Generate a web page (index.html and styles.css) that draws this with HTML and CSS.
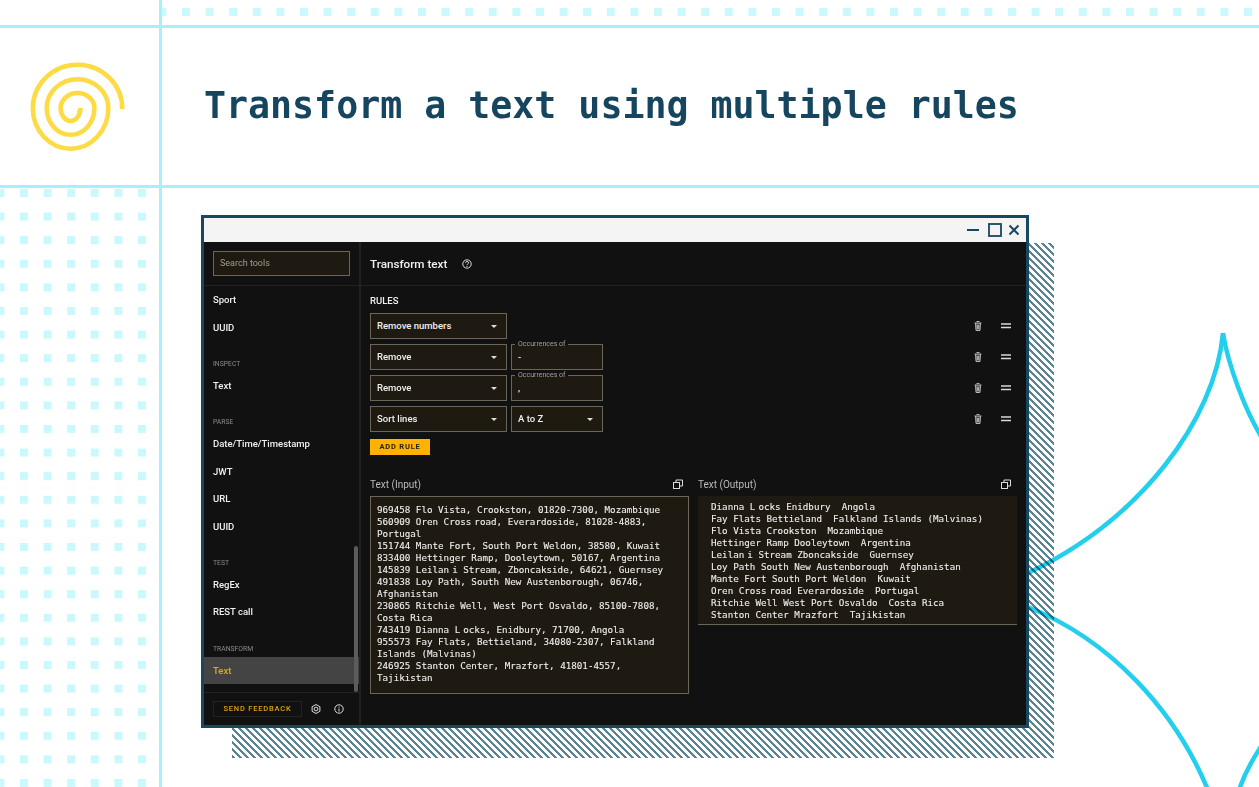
FILE: index.html
```html
<!DOCTYPE html>
<html lang="en">
<head>
<meta charset="utf-8">
<title>Transform a text using multiple rules</title>
<link rel="stylesheet" href="styles.css">
</head>
<body>
<div class="page">
  <svg class="curves" viewBox="0 0 1259 787" aria-hidden="true">
    <path d="M1223 333C1215 420 1140 520 1028 573"/>
    <path d="M1223 333C1228 365 1245 410 1262 438"/>
    <path d="M1028 607C1110 640 1175 710 1208 790"/>
    <path d="M1239 790C1243 778 1250 763 1262 745"/>
  </svg>

  <div class="row strip">
    <div class="cell-left"></div>
    <svg class="dots" aria-hidden="true"><defs><pattern id="dotsTop" x="-3.600" y="8" width="23.6" height="23.6" patternUnits="userSpaceOnUse"><rect class="dot" width="8" height="8"/></pattern></defs><rect width="100%" height="17" y="0" fill="url(#dotsTop)"/></svg>
  </div>

  <header class="row head">
    <div class="cell-left logo">
      <svg viewBox="0 0 160 158" width="159" height="158" aria-hidden="true"><path transform="translate(0 -28)" d="M123 109A45 44 0 0 0 33 108A38 41 0 0 0 109 108A31 29 0 0 0 47 108A24 27 0 0 0 95 108A17 15 0 0 0 61 108A10 13 0 0 0 81 108Q81 111 79 113"/></svg>
    </div>
    <h1>Transform a text using multiple rules</h1>
  </header>

  <div class="row stage">
    <div class="cell-left">
      <svg class="dots" aria-hidden="true"><defs><pattern id="dotsSide" x="-3.6" y="1" width="23.6" height="23.6" patternUnits="userSpaceOnUse"><rect class="dot" width="8" height="8"/></pattern></defs><rect width="100%" height="100%" fill="url(#dotsSide)"/></svg>
    </div>
    <div class="canvas">
      <div class="hatch"></div>
      <div class="window">
        <div class="titlebar">
          <svg viewBox="0 0 56 16" width="56" height="16" aria-hidden="true"><path d="M2 8H14"/><rect x="24" y="2" width="12" height="12"/><path d="M44.500 3.500L53.500 12.500M53.500 3.500L44.500 12.500"/></svg>
        </div>
        <div class="app">
          <aside class="sidebar">
            <div class="search-wrap"><div class="search">Search tools</div></div>
            <div class="tools">
              <div class="scrollbar"></div>
              <div class="tool">Sport</div>
              <div class="tool">UUID</div>
              <div class="cat">INSPECT</div>
              <div class="tool">Text</div>
              <div class="cat">PARSE</div>
              <div class="tool">Date/Time/Timestamp</div>
              <div class="tool">JWT</div>
              <div class="tool">URL</div>
              <div class="tool">UUID</div>
              <div class="cat">TEST</div>
              <div class="tool">RegEx</div>
              <div class="tool">REST call</div>
              <div class="cat">TRANSFORM</div>
              <div class="tool active">Text</div>
            </div>
            <div class="side-foot">
              <div class="feedback">SEND FEEDBACK</div>
              <svg class="ic" viewBox="0 0 12 12" width="12" height="12" aria-hidden="true"><path d="M6 1.500L9.900 3.700V8.300L6 10.500L2.100 8.300V3.700Z"/><circle cx="6" cy="6" r="1.900"/></svg>
              <svg class="ic" viewBox="0 0 12 12" width="12" height="12" aria-hidden="true"><circle cx="6" cy="6" r="4.200"/><path d="M6 5.500V8.500M6 3.600V4.600"/></svg>
            </div>
          </aside>
          <main class="main">
            <div class="main-head">
              <span class="main-title">Transform text</span>
              <svg class="ic" viewBox="0 0 12 12" width="12" height="12" aria-hidden="true"><circle cx="6" cy="6" r="4.200"/><path d="M4.500 4.800C4.500 3 7.600 3 7.600 4.800C7.600 5.900 6 5.800 6 7.200M6 8V9"/></svg>
            </div>
            <div class="content">
              <div class="rules-label">RULES</div>
              <div class="rule">
                <div class="select wide">Remove numbers<i class="caret"></i></div>
                <div class="actions"><svg class="trash" viewBox="0 0 10 12" width="10" height="12" aria-hidden="true"><path d="M3.500 1.500H6.500M1.500 3H8.500M2.500 3L3 10.500H7L7.500 3M4.300 5V9M5.700 5V9"/></svg><svg class="drag" viewBox="0 0 10 6" width="10" height="6" aria-hidden="true"><path d="M0 1H10M0 4.500H10"/></svg></div>
              </div>
              <div class="rule">
                <div class="select wide">Remove<i class="caret"></i></div>
                <div class="field"><span class="legend">Occurrences of</span>-</div>
                <div class="actions"><svg class="trash" viewBox="0 0 10 12" width="10" height="12" aria-hidden="true"><path d="M3.500 1.500H6.500M1.500 3H8.500M2.500 3L3 10.500H7L7.500 3M4.300 5V9M5.700 5V9"/></svg><svg class="drag" viewBox="0 0 10 6" width="10" height="6" aria-hidden="true"><path d="M0 1H10M0 4.500H10"/></svg></div>
              </div>
              <div class="rule">
                <div class="select wide">Remove<i class="caret"></i></div>
                <div class="field"><span class="legend">Occurrences of</span>,</div>
                <div class="actions"><svg class="trash" viewBox="0 0 10 12" width="10" height="12" aria-hidden="true"><path d="M3.500 1.500H6.500M1.500 3H8.500M2.500 3L3 10.500H7L7.500 3M4.300 5V9M5.700 5V9"/></svg><svg class="drag" viewBox="0 0 10 6" width="10" height="6" aria-hidden="true"><path d="M0 1H10M0 4.500H10"/></svg></div>
              </div>
              <div class="rule">
                <div class="select wide">Sort lines<i class="caret"></i></div>
                <div class="select narrow">A to Z<i class="caret"></i></div>
                <div class="actions"><svg class="trash" viewBox="0 0 10 12" width="10" height="12" aria-hidden="true"><path d="M3.500 1.500H6.500M1.500 3H8.500M2.500 3L3 10.500H7L7.500 3M4.300 5V9M5.700 5V9"/></svg><svg class="drag" viewBox="0 0 10 6" width="10" height="6" aria-hidden="true"><path d="M0 1H10M0 4.500H10"/></svg></div>
              </div>
              <div class="add-rule">ADD RULE</div>
              <div class="panes">
                <section class="pane">
                  <div class="pane-head"><span>Text (Input)</span><svg class="ic" viewBox="0 0 12 12" width="12" height="12" aria-hidden="true"><rect x="1.500" y="4.500" width="6" height="6"/><path d="M4 4.500V2H10.500V8H7.500"/></svg></div>
                  <pre class="box input">969458 Flo Vista, Crookston, 01820-7300, Mozambique
560909 Oren Cross<span class="th"></span>road, Everardoside, 81028-4883,
Portugal
151744 Mante Fort, South Port Weldon, 38580, Kuwait
833400 Hettinger Ramp, Dooleytown, 50167, Argentina
145839 Leilan<span class="th"></span>i Stream, Zboncakside, 64621, Guernsey
491838 Loy Path, South New Austenborough, 06746,
Afghanistan
230865 Ritchie Well, West Port Osvaldo, 85100-7808,
Costa Rica
743419 Dianna L<span class="th"></span>ocks, Enidbury, 71700, Angola
955573 Fay Flats, Bettieland, 34080-2307, Falkland
Islands (Malvinas)
246925 Stanton Center, Mrazfort, 41801-4557,
Tajikistan</pre>
                </section>
                <section class="pane">
                  <div class="pane-head"><span>Text (Output)</span><svg class="ic" viewBox="0 0 12 12" width="12" height="12" aria-hidden="true"><rect x="1.500" y="4.500" width="6" height="6"/><path d="M4 4.500V2H10.500V8H7.500"/></svg></div>
                  <pre class="box output">Dianna L<span class="th"></span>ocks Enidbury  Angola
Fay Flats Bettieland  Falkland Islands (Malvinas)
Flo Vista Crookston  Mozambique
Hettinger Ramp Dooleytown  Argentina
Leilan<span class="th"></span>i Stream Zboncakside  Guernsey
Loy Path South New Austenborough  Afghanistan
Mante Fort South Port Weldon  Kuwait
Oren Cross<span class="th"></span>road Everardoside  Portugal
Ritchie Well West Port Osvaldo  Costa Rica
Stanton Center Mrazfort  Tajikistan</pre>
                </section>
              </div>
            </div>
          </main>
        </div>
      </div>
    </div>
  </div>
</div>
</body>
</html>
```

FILE: styles.css
```css
* { box-sizing: border-box; }
html, body { margin: 0; padding: 0; background: #fff; }
body { font-family: Roboto, "Noto Sans", sans-serif; }

.page { position: relative; width: 1259px; height: 787px; overflow: hidden; background: #fff; display: flex; flex-direction: column; }
.row { display: grid; grid-template-columns: 162px 1fr; }
.cell-left { border-right: 3px solid #a6f0fc; position: relative; }
.strip { height: 28px; border-bottom: 3px solid #a6f0fc; }
.head { height: 160px; border-bottom: 3px solid #a6f0fc; align-items: center; }
.stage { flex: 1; min-height: 0; }
.head .cell-left { height: 100%; }

.dots { display: block; width: 100%; height: 100%; }
.dot { fill: #c9f8fd; }

.logo svg { display: block; }
.logo path { fill: none; stroke: #fddb44; stroke-width: 4.600; }

h1 { margin: 0 0 3px 42px; font-family: "DejaVu Sans Mono", monospace; font-weight: 700; font-size: 36.600px; letter-spacing: 0; color: #15455f; white-space: nowrap; }

.curves { position: absolute; left: 0; top: 0; width: 1259px; height: 787px; z-index: 1; pointer-events: none; mix-blend-mode: multiply; }
.curves path { fill: none; stroke: #22cfec; stroke-width: 4.500; }

.canvas { position: relative; padding: 27px 0 0 39px; }
.hatch { position: absolute; left: 70px; top: 55px; width: 822px; height: 515px; background: repeating-linear-gradient(45deg, #5a8494 0, #5a8494 2.475px, #fff 2.475px, #fff 4.950px); }

.window { position: relative; z-index: 2; width: 828px; height: 513px; border: 3px solid #17485f; background: #111; display: flex; flex-direction: column; }
.titlebar { height: 24px; background: #f4f4f4; display: flex; align-items: center; justify-content: flex-end; padding-right: 5px; flex: none; }
.titlebar svg { fill: none; stroke: #17485f; stroke-width: 2; }
.titlebar rect { stroke-width: 1.800; }

.app { flex: 1; min-height: 0; display: flex; color: #f0f0f0; font-size: 9.500px; }
.sidebar { width: 157px; flex: none; border-right: 2px solid #222; display: flex; flex-direction: column; }
.search-wrap { height: 44px; border-bottom: 1px solid #222; padding: 9px 9px 0; flex: none; }
.search { height: 25px; background: #1f1a11; border: 1px solid #6b6658; color: #a09c90; font-size: 9px; line-height: 23px; padding-left: 6px; }
.tools { position: relative; flex: 1; min-height: 0; overflow: hidden; }
.scrollbar { position: absolute; right: 1px; bottom: 0; width: 4px; height: 146px; background: #5c5c5c; border-radius: 2px; z-index: 1; }
.tool { height: 27.500px; line-height: 28px; padding-left: 9px; font-weight: 500; }
.tool.active { background: #444; color: #e8a80c; }
.cat { height: 16px; margin-top: 14.800px; line-height: 16px; padding-left: 9px; font-size: 6.800px; color: #8a8a8a; }
.side-foot { height: 33px; flex: none; border-top: 1px solid #222; display: flex; align-items: center; padding-left: 9px; gap: 11px; }
.feedback { width: 89px; height: 16px; border: 1px solid #222; color: #e0a010; font-size: 7.500px; font-weight: 500; letter-spacing: 0.800px; line-height: 14px; text-align: center; margin-right: -3px; }
.ic { fill: none; stroke: #ddd; stroke-width: 1; flex: none; }

.main { flex: 1; min-width: 0; display: flex; flex-direction: column; }
.main-head { height: 44px; flex: none; border-bottom: 1px solid #222; padding-left: 9px; display: flex; align-items: center; gap: 14px; }
.main-title { font-size: 11.700px; font-weight: 500; }
.content { padding: 8px 10px 0 9px; flex: 1; min-height: 0; }
.rules-label { height: 14px; line-height: 14px; font-size: 9.500px; font-weight: 500; margin-bottom: 5px; }
.rule { display: flex; align-items: center; gap: 4px; height: 26px; margin-bottom: 5px; }
.select, .field { position: relative; height: 26px; background: #1f1a11; border: 1px solid #6b6658; line-height: 24px; padding-left: 6px; font-weight: 500; font-size: 9.500px; }
.wide { width: 137px; }
.narrow, .field { width: 92px; }
.caret { position: absolute; right: 9px; top: 11px; width: 0; height: 0; border-left: 3px solid transparent; border-right: 3px solid transparent; border-top: 3px solid #ddd; }
.legend { position: absolute; left: 3px; top: -5px; padding: 0 3px; height: 9px; line-height: 9px; font-size: 7px; font-weight: 400; color: #a5a298; background: linear-gradient(#111 0 5px, #1f1a11 5px); }
.actions { margin-left: auto; padding-right: 5px; display: flex; align-items: center; gap: 18px; }
.trash { fill: #555; stroke: #b5b5b5; stroke-width: 1; }
.drag { fill: none; stroke: #d8d8d8; stroke-width: 1.700; }
.add-rule { width: 60px; height: 16px; margin-top: 7px; background: #ffb300; color: #2a2008; font-size: 7.500px; font-weight: 700; letter-spacing: 0.800px; line-height: 16px; text-align: center; }
.panes { display: grid; grid-template-columns: 319px 319px; gap: 9px; margin-top: 22px; align-items: start; }
.pane-head { height: 14px; display: flex; align-items: center; justify-content: space-between; padding-right: 5px; color: #bbb; font-size: 10px; margin-bottom: 5px; }
.box { margin: 0; background: #1f1a11; font-family: "DejaVu Sans Mono", monospace; font-size: 9.230px; line-height: 12px; color: #eee; -webkit-text-stroke: 0.1px #eee; }
.input { height: 198px; border: 1px solid #6b6658; padding: 7px 0 0 6px; }
.output { height: 129px; border-bottom: 1px solid #6b6658; padding: 5px 0 0 13px; }
.th { display: inline-block; width: 3px; }
```
